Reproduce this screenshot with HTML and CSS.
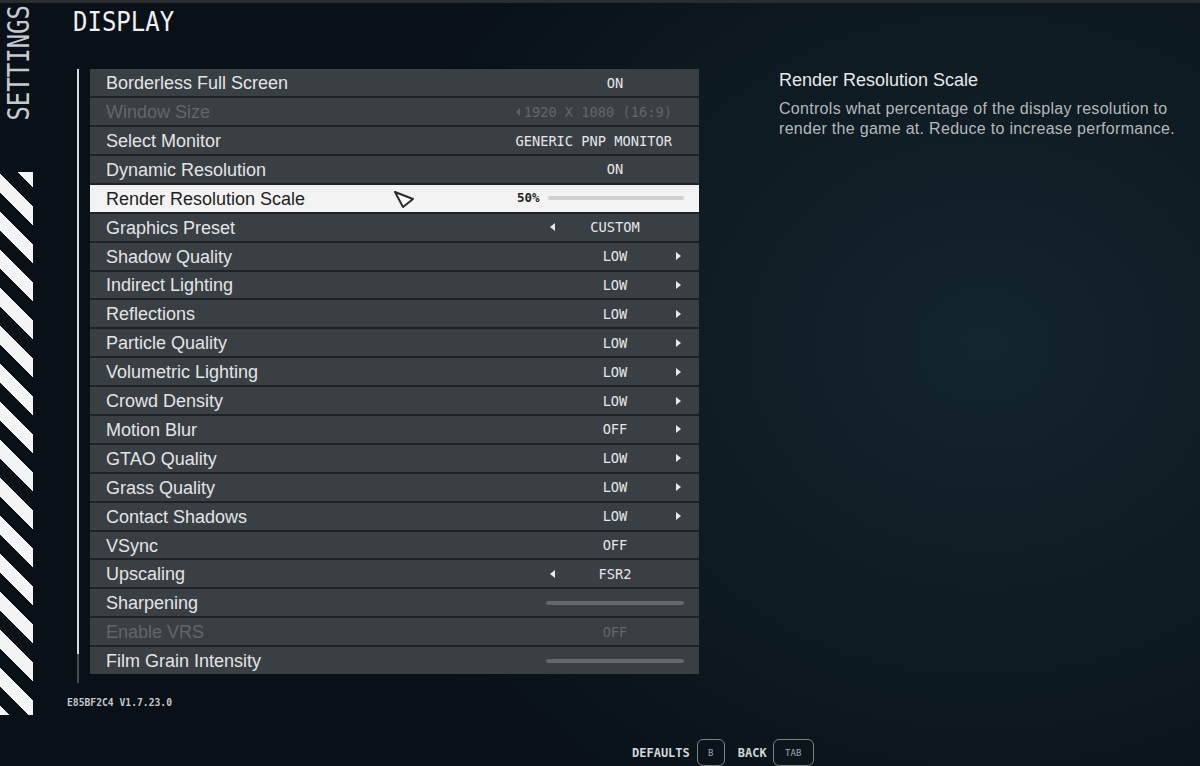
FILE: index.html
```html
<!DOCTYPE html>
<html lang="en">
<head>
    <meta charset="UTF-8">
    <title>Settings - Display</title>
    <link rel="stylesheet" href="styles.css">
</head>
<body>
    <div class="topbar"></div>
    <div class="page">
        <div class="rail">
            <div class="rail-title">SETTINGS</div>
            <div class="stripes"></div>
        </div>

        <div class="main">
            <div class="header">
                <span class="title">DISPLAY</span>
            </div>

            <div class="content">
                <div class="track"><div class="thumb"></div></div>

                <div class="list">
                    <div class="row">
                        <span class="label">Borderless Full Screen</span>
                        <div class="val"><span class="text">ON</span></div>
                    </div>
                    <div class="row disabled">
                        <span class="label">Window Size</span>
                        <div class="val wide"><span class="arr-inline"></span><span class="text">1920 X 1080 (16:9)</span></div>
                    </div>
                    <div class="row">
                        <span class="label">Select Monitor</span>
                        <div class="val wide"><span class="text">GENERIC PNP MONITOR</span></div>
                    </div>
                    <div class="row">
                        <span class="label">Dynamic Resolution</span>
                        <div class="val"><span class="text">ON</span></div>
                    </div>
                    <div class="row active">
                        <span class="label">Render Resolution Scale</span>
                        <svg class="cursor" width="24" height="22" viewBox="0 0 24 22">
                            <polygon points="3,3 21,10 11,18" fill="#fff" stroke="#2b2b2b" stroke-width="2" stroke-linejoin="round"/>
                        </svg>
                        <div class="val slider">
                            <span class="pct">50%</span>
                            <div class="bar"></div>
                        </div>
                    </div>
                    <div class="row">
                        <span class="label">Graphics Preset</span>
                        <div class="val"><span class="arr-l"></span><span class="text">CUSTOM</span></div>
                    </div>
                    <div class="row">
                        <span class="label">Shadow Quality</span>
                        <div class="val"><span class="text">LOW</span><span class="arr-r"></span></div>
                    </div>
                    <div class="row">
                        <span class="label">Indirect Lighting</span>
                        <div class="val"><span class="text">LOW</span><span class="arr-r"></span></div>
                    </div>
                    <div class="row">
                        <span class="label">Reflections</span>
                        <div class="val"><span class="text">LOW</span><span class="arr-r"></span></div>
                    </div>
                    <div class="row">
                        <span class="label">Particle Quality</span>
                        <div class="val"><span class="text">LOW</span><span class="arr-r"></span></div>
                    </div>
                    <div class="row">
                        <span class="label">Volumetric Lighting</span>
                        <div class="val"><span class="text">LOW</span><span class="arr-r"></span></div>
                    </div>
                    <div class="row">
                        <span class="label">Crowd Density</span>
                        <div class="val"><span class="text">LOW</span><span class="arr-r"></span></div>
                    </div>
                    <div class="row">
                        <span class="label">Motion Blur</span>
                        <div class="val"><span class="text">OFF</span><span class="arr-r"></span></div>
                    </div>
                    <div class="row">
                        <span class="label">GTAO Quality</span>
                        <div class="val"><span class="text">LOW</span><span class="arr-r"></span></div>
                    </div>
                    <div class="row">
                        <span class="label">Grass Quality</span>
                        <div class="val"><span class="text">LOW</span><span class="arr-r"></span></div>
                    </div>
                    <div class="row">
                        <span class="label">Contact Shadows</span>
                        <div class="val"><span class="text">LOW</span><span class="arr-r"></span></div>
                    </div>
                    <div class="row">
                        <span class="label">VSync</span>
                        <div class="val"><span class="text">OFF</span></div>
                    </div>
                    <div class="row">
                        <span class="label">Upscaling</span>
                        <div class="val"><span class="arr-l"></span><span class="text">FSR2</span></div>
                    </div>
                    <div class="row">
                        <span class="label">Sharpening</span>
                        <div class="val"><div class="bar full"></div></div>
                    </div>
                    <div class="row disabled">
                        <span class="label">Enable VRS</span>
                        <div class="val"><span class="text">OFF</span></div>
                    </div>
                    <div class="row">
                        <span class="label">Film Grain Intensity</span>
                        <div class="val"><div class="bar full"></div></div>
                    </div>
                </div>

                <div class="desc">
                    <div class="desc-title">Render Resolution Scale</div>
                    <div class="desc-text">Controls what percentage of the display resolution to render the game at. Reduce to increase performance.</div>
                </div>
            </div>

            <div class="version">E85BF2C4 V1.7.23.0</div>

            <div class="footer">
                <span>DEFAULTS</span>
                <span class="key key-b">B</span>
                <span class="back">BACK</span>
                <span class="key key-tab">TAB</span>
            </div>
        </div>
    </div>
</body>
</html>
```

FILE: styles.css
```css
html, body {
    margin: 0;
    height: 766px;
    overflow: hidden;
}
body {
    font-family: "Liberation Sans", Arial, sans-serif;
    color: #e2e4e6;
    background: radial-gradient(ellipse 55% 75% at 82% 45%, #14252e 0%, #0e1a21 55%, #091017 100%);
}
.topbar {
    height: 3px;
    background-color: #2a2d30;
}
.page {
    display: flex;
    height: 763px;
}

/* left rail */
.rail {
    width: 40px;
    flex-shrink: 0;
    display: flex;
    flex-direction: column;
}
.rail-title {
    writing-mode: vertical-rl;
    transform: rotate(180deg) scaleX(1.25);
    font: 24px/24px "DejaVu Sans Mono", monospace;
    color: #c6cacd;
    width: 24px;
    margin: 2px 0 0 7px;
}
.stripes {
    width: 33px;
    height: 543px;
    margin-top: 51px;
    background: repeating-linear-gradient(45deg, #f4f4f4 0 7.07px, transparent 7.07px 19.8px, #f4f4f4 19.8px 26.87px);
}

/* main column */
.main {
    flex: 1;
    display: flex;
    flex-direction: column;
}
.header {
    height: 67px;
    box-sizing: border-box;
    padding: 6px 0 0 33px;
}
.title {
    display: inline-block;
    font: 24px/24px "DejaVu Sans Mono", monospace;
    color: #eef0f2;
    transform: scaleY(1.12);
    transform-origin: top left;
}
.content {
    display: flex;
    align-items: flex-start;
    height: 614px;
    padding-left: 37px;
}
.track {
    width: 2px;
    height: 614px;
    background-color: #464b50;
}
.thumb {
    height: 585px;
    background-color: #d8dbde;
}

/* settings list */
.list {
    width: 609px;
    margin-left: 11px;
    display: flex;
    flex-direction: column;
    gap: 2px;
    background-color: #1c2227;
}
.row {
    position: relative;
    height: 26.9px;
    display: flex;
    align-items: center;
    padding: 0 15px 0 16px;
    background-color: #3a3f44;
    font-size: 18px;
}
.label {
    flex: 1;
    padding-top: 2px;
    white-space: nowrap;
}
.val {
    width: 138px;
    display: grid;
    grid-template-columns: 12px 1fr 12px;
    align-items: center;
    font: 13.7px/16px "DejaVu Sans Mono", monospace;
    color: #e4e6e8;
}
.val .text {
    grid-column: 2;
    justify-self: center;
    white-space: nowrap;
}
.val.wide {
    display: flex;
    justify-content: flex-end;
    padding-right: 12px;
    box-sizing: border-box;
}
.arr-l,
.arr-r,
.arr-inline {
    width: 0;
    height: 0;
    border-top: 4.5px solid transparent;
    border-bottom: 4.5px solid transparent;
}
.arr-l {
    grid-column: 1;
    justify-self: center;
    border-right: 5px solid #e6e8ea;
}
.arr-r {
    grid-column: 3;
    justify-self: center;
    border-left: 5px solid #e6e8ea;
}
.arr-inline {
    flex-shrink: 0;
    margin-right: 4px;
    border-top-width: 4px;
    border-bottom-width: 4px;
    border-right: 4px solid #5d6266;
}
.bar {
    height: 4px;
    border-radius: 2px;
    background-color: #62676b;
}
.bar.full {
    grid-column: 1 / -1;
}
.val.slider {
    width: 167px;
    display: flex;
    gap: 8px;
}
.val.slider .bar {
    flex: 1;
}
.pct {
    font-weight: bold;
    font-size: 12.5px;
}
.cursor {
    position: absolute;
    left: 302px;
    top: 4px;
}
.row.active {
    background-color: #f3f3f3;
    color: #1d1f21;
}
.row.active .val {
    color: #1d1f21;
}
.row.active .bar {
    background-color: #cfd0d1;
}
.row.disabled,
.row.disabled .val {
    color: #62676c;
}

/* description */
.desc {
    width: 400px;
    margin-left: 80px;
}
.desc-title {
    font-size: 18px;
    line-height: 22px;
    color: #e6e8ea;
}
.desc-text {
    margin-top: 8px;
    font-size: 16px;
    line-height: 20px;
    letter-spacing: 0.3px;
    color: #b4b8bc;
}

/* bottom */
.version {
    margin: 13.7px 0 0 27px;
    font: bold 9.7px/12px "DejaVu Sans Mono", monospace;
    color: #c4c8cc;
}
.footer {
    margin-top: 30px;
    padding-left: 592px;
    display: flex;
    align-items: center;
    font: bold 12px "DejaVu Sans Mono", monospace;
    color: #d2d6da;
}
.key {
    height: 27px;
    box-sizing: border-box;
    display: flex;
    align-items: center;
    justify-content: center;
    border: 1.5px solid #7d8287;
    border-radius: 6px;
    font-weight: normal;
    font-size: 9px;
    color: #a3a8ad;
}
.key-b {
    width: 28px;
    margin: 0 13px 0 7px;
}
.back {
    margin-right: 6px;
}
.key-tab {
    width: 41px;
}
```
